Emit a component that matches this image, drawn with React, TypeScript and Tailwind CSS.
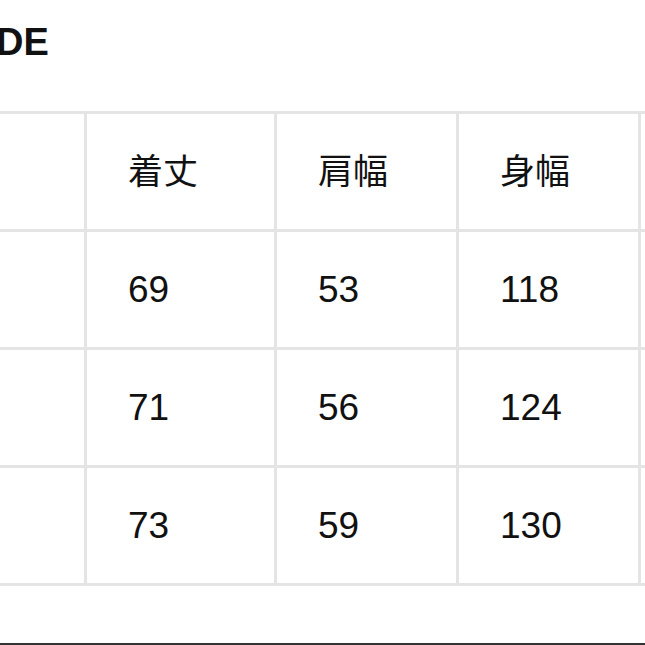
import React from "react";

const header = ["", "着丈", "肩幅", "身幅", ""];
const rows = [
  ["", "69", "53", "118", ""],
  ["", "71", "56", "124", ""],
  ["", "73", "59", "130", ""],
];

export default function App() {
  return (
    <div
      className="w-[645px] h-[645px] bg-white overflow-hidden relative text-[#111]"
      style={{ fontFamily: '"Liberation Sans", "Noto Sans CJK JP", sans-serif' }}
    >
      <div className="pt-[23px] ml-[-4px] text-[38px] leading-[38px] font-bold">
        DE
      </div>
      <div className="mt-[50px] ml-[-20px] w-[840px] bg-[#e4e4e4] grid grid-cols-[104px_187px_179px_179px_179px] gap-[3px] py-[3px]">
        {header.map((c, j) => (
          <div
            key={`h-${j}`}
            className="bg-white h-[115px] flex items-center pl-[41px] text-[35px] leading-none"
          >
            {c}
          </div>
        ))}
        {rows.map((r, i) =>
          r.map((c, j) => (
            <div
              key={`${i}-${j}`}
              className="bg-white h-[115px] flex items-center pl-[41px] text-[37px] leading-none"
            >
              {c}
            </div>
          ))
        )}
      </div>
      <div className="absolute left-0 right-0 top-[643px] h-[2px] bg-[#333]" />
    </div>
  );
}
